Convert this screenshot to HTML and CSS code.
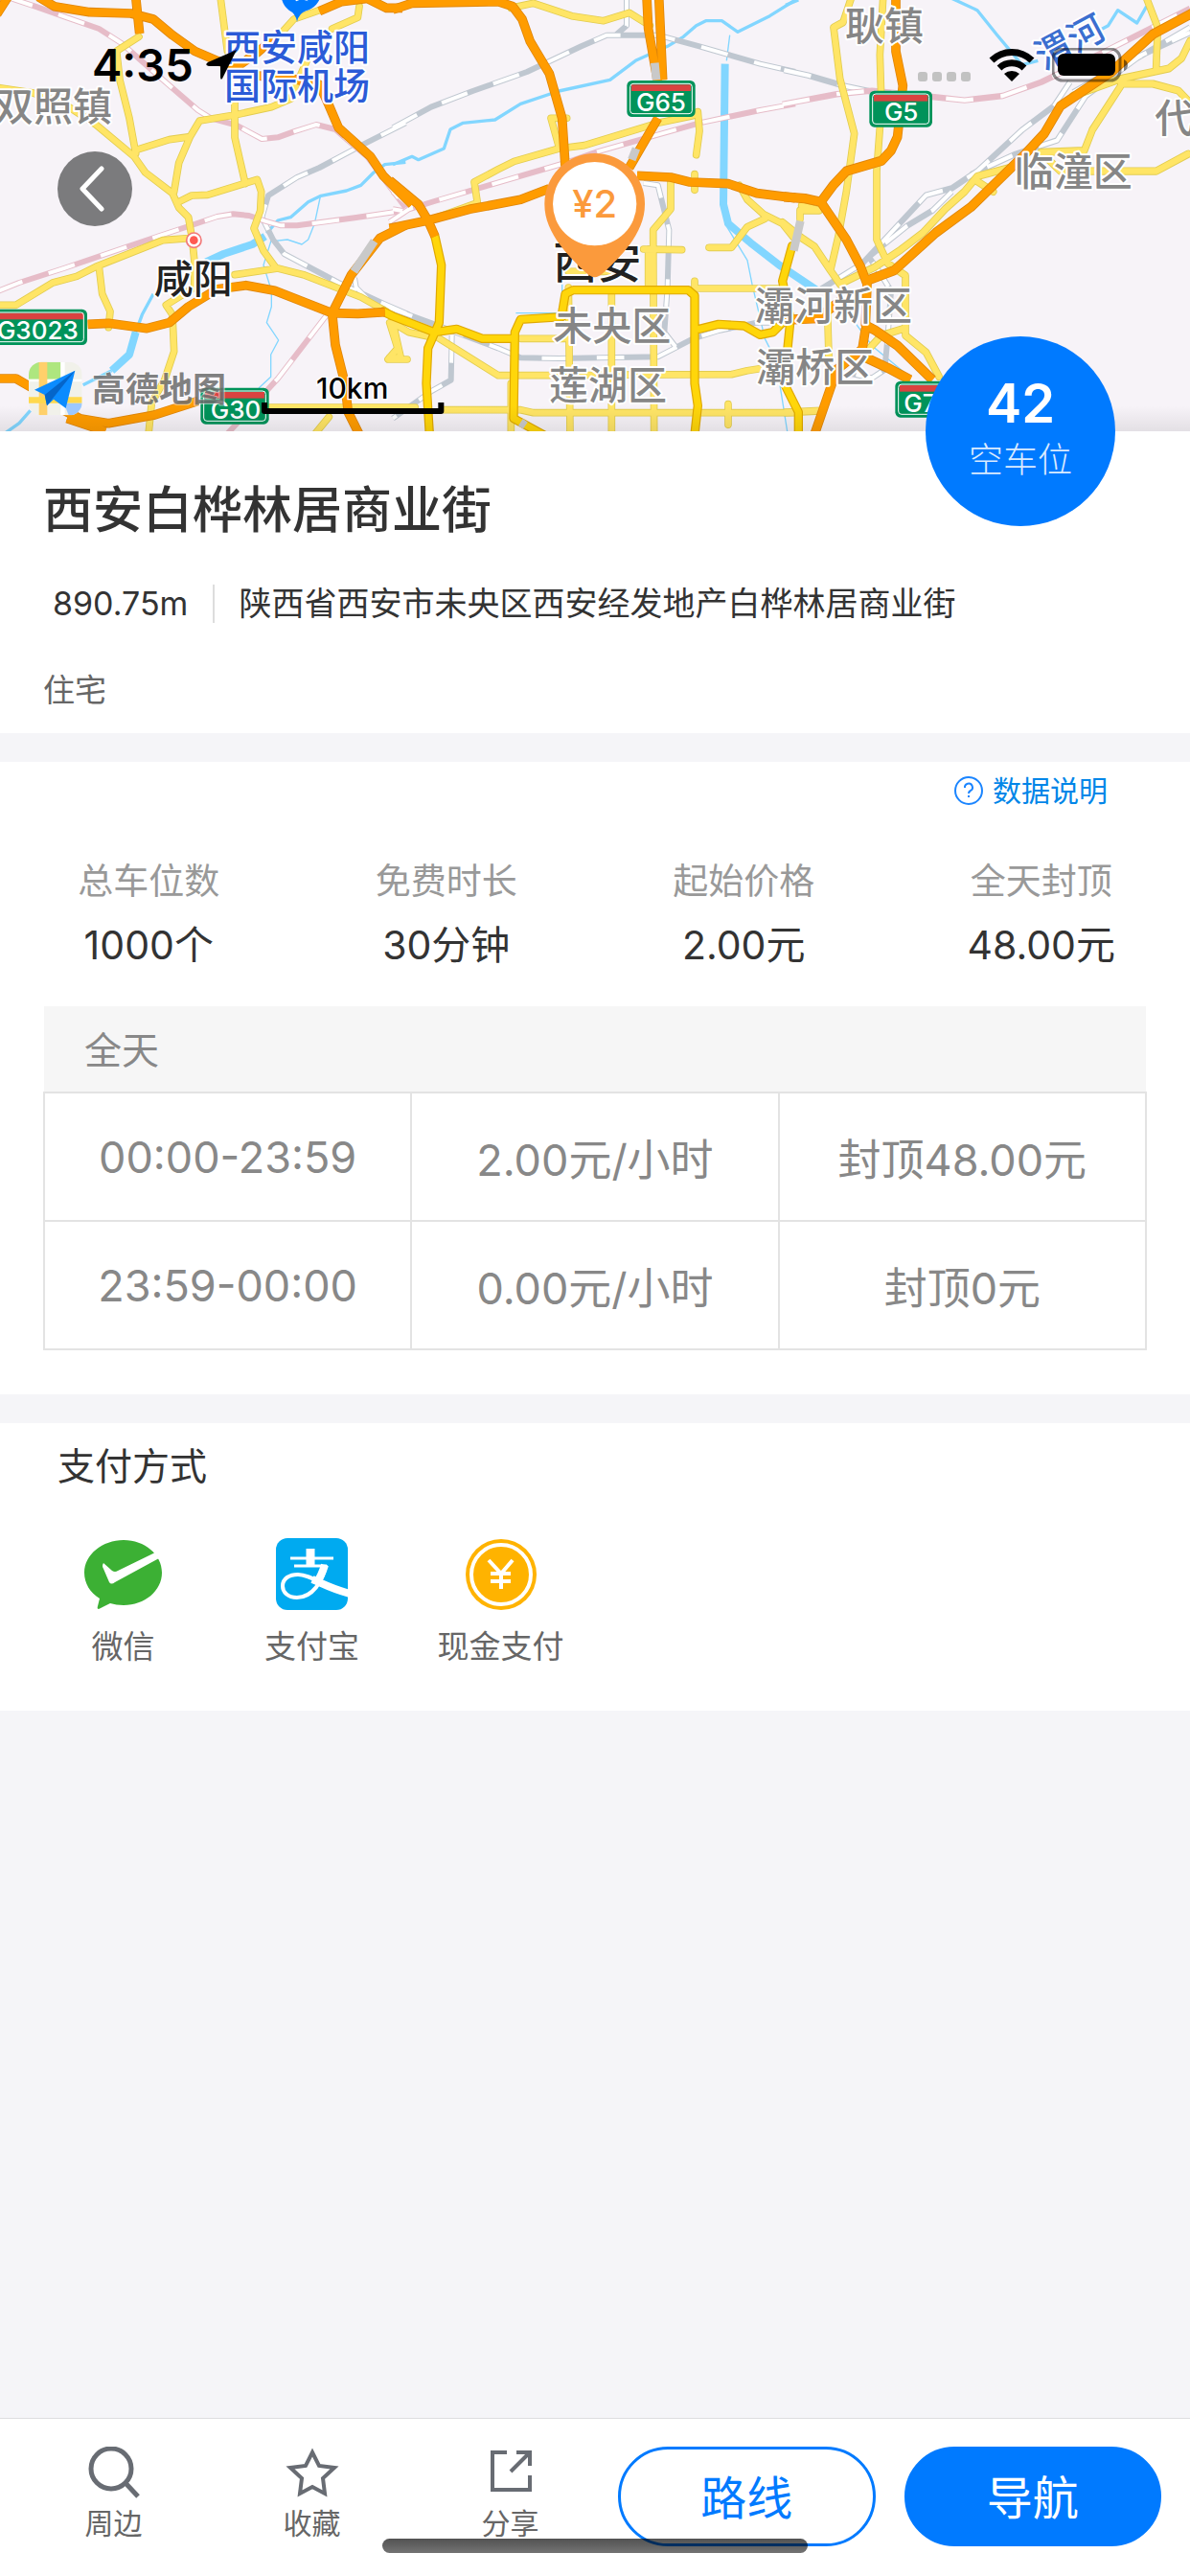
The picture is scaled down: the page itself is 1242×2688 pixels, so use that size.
FILE: index.html
```html
<!DOCTYPE html>
<html lang="zh-CN">
<head>
    <meta charset="UTF-8">
    <meta name="viewport" content="width=device-width, initial-scale=1">
    <title>西安白桦林居商业街</title>
    <link rel="stylesheet" href="styles.css">
</head>
<body>
<div class="app">
    <header class="map-header">
        <svg class="map" viewBox="0 0 3726 1350" preserveAspectRatio="xMidYMid slice">
            <defs>
                <g id="minor-roads">
                    <path d="M0 275L100 290L200 325L300 390L420 490L455 540L540 605L560 650L590 680L602 750L610 830L608 900L520 955L540 985L545 1100L515 1190L475 1260L465 1360M435 115L365 160L375 250L405 370L425 480M425 470L530 437L595 428L625 378L735 360L850 335L910 310L930 260L965 180M595 428L560 510L545 600M735 320V430L768 575M560 632L600 612L650 610L805 562L818 600L815 660L795 715L825 785L865 840M602 745L510 752L300 835L240 865L165 885L50 955H-10M310 835L320 920L345 975L340 1025M690 -10L712 160M1000 32L920 60L875 110M1125 20L1120 55L1040 90M735 860L870 840L950 860L1130 930L1210 975M740 1275H1300M1220 1010L1245 1090L1215 1125H1275M1030 1305L985 1360"/>
                    <path transform="translate(1230)" d="M370 25L440 10L560 50L660 65L740 40L805 80M135 682L265 635L255 570L330 530L380 505L520 465L600 455L830 385L940 362M545 370H495L520 460M955 350L960 410L950 485M870 570V655L815 720L818 1360M785 780L905 782M990 775H1060L1110 710L1165 685M1085 580L1110 625L1160 670L1220 700L1260 750M945 545V595M550 900L555 1360M685 920V1360M800 900V780M550 850H700M950 903H1220M945 880V905M400 1060H540M130 1050L330 1175L1060 1172L1110 1160L1240 1140M160 1283L400 1283L440 1292L1260 1292M1050 1265V1330M0 1010L50 1040L120 1055M0 1010L25 1120H-10M370 1200V1360"/>
                    <path transform="translate(2460) scale(1 1.0714)" d="M205 -5L180 65L150 80L170 230L215 390L190 560L165 690L140 790L170 830M305 -5L295 160L300 310L285 500V700L320 770L375 805V980L440 1030L480 1100M170 830L280 780L360 730L430 680L500 610L560 560L600 515L710 488M600 530L650 560M-10 650L50 695L90 720L140 790M50 600L105 615H45V640M130 880L135 1040M370 960L300 980L240 1040M1130 -5L1165 80L1160 200M900 280L1050 230L1200 200L1240 170L1266 120M1050 250L960 380L935 440L800 445L860 500H1160L1260 450M1050 245H1150L1230 265L1266 300M0 1205L110 1200"/>
                </g>
                <g id="ring-roads">
                    <path transform="translate(1230)" d="M-30 975L0 990L130 1040L200 1030L280 1060H370M132 740L152 830L145 1010L110 1090L105 1200L115 1360M530 980L540 920L565 908H925L945 925V1200L955 1270L945 1360M530 992L400 1000L382 1040L378 1310L470 1360M960 1030L1020 1015L1100 1020L1150 1048L1190 1040L1225 1005M1250 770L1220 880L1245 1000L1225 1200L1270 1290V1360"/>
                </g>
                <g id="highways">
                    <path d="M120 -10L170 20L280 38L410 42L480 60L540 110L610 160L680 190L740 210L805 165L870 110M780 235L910 245L1000 265L1030 330L1060 400L1110 445L1160 490L1200 550L1290 640M425 -10L437 105M-10 45L25 -10M1000 35L1070 5L1150 -5L1210 25L1260 25M275 1015L340 1012L460 1028L530 1010L590 960L680 905L770 893L860 910L950 945L1040 980L1120 982L1205 977M1270 705L1190 745L1100 860L1040 980L1050 1080L1080 1200L1090 1290L1130 1370M-10 1185H50L110 1220L190 1280L250 1310L340 1325L480 1300L620 1255M210 1310L330 1350"/>
                    <path transform="translate(1230)" d="M0 30L60 10L330 5L375 20L405 60L430 130L490 230L530 370L540 520M795 -10L800 90L830 260M833 -10L845 250M830 370L740 525M-10 715L110 690L240 655L400 625L490 590M765 550L870 555L930 570L1050 575L1140 605L1260 620M-10 565L80 640L110 690L132 740"/>
                    <path transform="translate(2460) scale(1 1.0714)" d="M345 -10V150L367 250L350 400L330 440L300 470L190 500L150 540L110 590M-5 575L60 580L110 590L190 700L235 780L255 830L250 950L280 965L350 1010L460 1110M250 960L240 1020L160 1080L90 1270M1280 35L1150 100L1020 210L860 310L810 390L750 450L580 605L470 680L340 790L240 825M-10 935L100 930L170 880M240 1040L320 1075L390 1110"/>
                </g>
                <g id="rail">
                    <path d="M1270 385L1145 448L1000 525L930 555L840 612L820 680L855 750L890 795L1060 885L1200 950L1280 985M1110 870L1115 900L1150 935"/>
                    <path transform="translate(1230)" d="M0 400L120 335L250 285L420 225L590 145L670 110L830 110L960 145L1150 200L1260 225M732 -5V80L700 108M785 573L830 580L865 720L860 900L850 1040L885 1085M-20 960L130 1015L330 1090L400 1120L520 1122L830 1117L940 1060L1020 1035L1140 1010H1240M185 1050L182 1190L120 1225L0 1310"/>
                    <path transform="translate(2460) scale(1 1.0714)" d="M-5 205L70 220L180 250L280 270M890 240L840 310L740 380L600 500L520 550L440 570L300 710L240 770L110 845M1266 80L1100 170L940 280L850 410L720 450L580 510M900 270L1070 180L1266 95M520 560L460 615L380 660L260 750L290 790L330 850L320 980L310 1080L270 1105L200 1090"/>
                </g>
                <g id="fast-rail">
                    <path d="M20 -10L110 20L210 55L310 90L380 135L510 250L620 345L660 370L740 392L820 435L870 430L920 412L990 390L1050 405L1090 440L1150 490L1270 650M-10 913L60 885L200 840L500 738L600 705L680 678L730 670L780 675L830 692L880 706H930L1110 682L1260 660M1020 990L870 1185L710 1360"/>
                    <path transform="translate(1230)" d="M-10 695L50 655L130 630L300 580L540 510L640 475L800 430L960 385L1150 345L1260 325M0 600L60 650M30 660L0 655"/>
                    <path transform="translate(2460) scale(1 1.0714)" d="M-10 305L160 275L270 265L480 285L560 293L680 280L800 240L1000 150L1266 25"/>
                </g>
                <linearGradient id="map-fade" x1="0" y1="0" x2="0" y2="1">
                    <stop offset="0" stop-color="#000" stop-opacity="0"/>
                    <stop offset="1" stop-color="#000" stop-opacity=".08"/>
                </linearGradient>
                <clipPath id="logo-clip">
                    <rect x="90" y="1133" width="167" height="167" rx="40"/>
                </clipPath>
            </defs>

            <rect class="land" width="3726" height="1350"/>

            <g class="river">
                <path d="M1270 508L1205 515L1170 540L1130 580L1085 597L1005 613L965 632L910 680L870 690L835 730M480 920L445 985L425 1040M350 1160L260 1205M95 1285L60 1325L10 1360"/>
                <path class="wide" d="M830 740L790 765L700 795L645 820M425 1040L405 1110L350 1160"/>
                <path class="thin" d="M850 750L825 830L850 910V960L835 1010L872 1065L848 1110V1180L810 1215M1003 615L985 700L965 750L945 765L900 750L855 755"/>
                <path transform="translate(1230)" d="M0 515L60 490L80 500L160 465L180 405L220 385L320 375L400 325L520 285L680 250L760 190L860 145L910 115L950 80L980 65L1030 65L1080 100L1180 50L1260 0"/>
                <path class="wide" transform="translate(1230)" d="M1040 200L1035 640L1050 700L1120 760L1210 830L1330 910"/>
                <path class="thin" transform="translate(1230)" d="M1045 190L1055 110M1040 700L1110 815L1125 890L1165 1060L1200 1130L1235 1350M385 980H530M530 860V980"/>
                <path transform="translate(2460)" d="M520 -5L600 32L660 107L740 203L790 190M980 96L1010 80L1040 32L1100 72L1130 20M0 16L40 0"/>
                <path class="thin" transform="translate(2460)" d="M210 1000L270 1082L380 1173"/>
            </g>

            <use href="#rail" class="rail-line"/>
            <use href="#rail" class="rail-dash"/>
            <use href="#fast-rail" class="rail-line fast"/>
            <use href="#fast-rail" class="rail-dash"/>
            <use href="#minor-roads" class="minor casing"/>
            <use href="#minor-roads" class="minor"/>
            <use href="#ring-roads" class="ring casing"/>
            <use href="#ring-roads" class="ring"/>
            <use href="#highways" class="highway casing"/>
            <use href="#highways" class="highway"/>
            <path class="tunnel" d="M1172 755L1108 850M2050 197L2055 250M1992 465L1978 500M2506 692L2485 785M1630 1322L1645 1332"/>

            <g class="shield">
                <rect x="-60" y="968" width="333" height="112" rx="16"/>
                <rect class="band" x="-48" y="980" width="310" height="20"/>
                <path d="M-60 978H253Q262 978 262 987V1061Q262 1070 253 1070H-60"/>
                <text x="118" y="1062">G3023</text>
                <rect x="628" y="1214" width="214" height="114" rx="16"/>
                <rect class="band" x="642" y="1227" width="186" height="20"/>
                <path d="M648 1224H822Q832 1224 832 1234V1308Q832 1318 822 1318H648Q638 1318 638 1308V1234Q638 1224 648 1224Z"/>
                <text x="738" y="1310">G30</text>
                <rect x="1963" y="252" width="214" height="114" rx="16"/>
                <rect class="band" x="1977" y="265" width="186" height="20"/>
                <path d="M1983 262H2157Q2167 262 2167 272V346Q2167 356 2157 356H1983Q1973 356 1973 346V272Q1973 262 1983 262Z"/>
                <text x="2070" y="347">G65</text>
                <rect x="2722" y="284" width="197" height="114" rx="16"/>
                <rect class="band" x="2736" y="297" width="169" height="20"/>
                <path d="M2742 294H2899Q2909 294 2909 304V378Q2909 388 2899 388H2742Q2732 388 2732 378V304Q2732 294 2742 294Z"/>
                <text x="2822" y="379">G5</text>
                <rect x="2803" y="1193" width="214" height="114" rx="16"/>
                <rect class="band" x="2817" y="1206" width="186" height="20"/>
                <path d="M2823 1203H2997Q3007 1203 3007 1213V1287Q3007 1297 2997 1297H2823Q2813 1297 2813 1287V1213Q2813 1203 2823 1203Z"/>
                <text x="2906" y="1289">G70</text>
            </g>

            <g class="place">
                <text x="-18" y="378">双照镇</text>
                <text x="1732" y="1066">未央区</text>
                <text x="1719" y="1251">莲湖区</text>
                <text x="2364" y="1003">灞河新区</text>
                <text x="2368" y="1195">灞桥区</text>
                <text x="2646" y="126">耿镇</text>
                <text x="3176" y="583">临潼区</text>
                <text x="3616" y="414">代</text>
            </g>
            <text class="place city" x="482" y="918">咸阳</text>
            <text class="place capital" x="1732" y="870">西安</text>
            <g class="place airport">
                <text x="702" y="188">西安咸阳</text>
                <text x="702" y="309">国际机场</text>
            </g>
            <text class="place water-name" x="3350" y="172" transform="rotate(-28 3350 132)">渭河</text>

            <circle cx="607" cy="752" r="23" fill="#fff" stroke="#f27a7a" stroke-width="5"/>
            <circle cx="607" cy="752" r="13" fill="#ff5a52"/>
            <path d="M881 -20A62 62 0 0 0 905 32Q926 42 930 68Q936 42 958 34A62 62 0 0 0 1005 -20Z" fill="#007aff"/>
            <path d="M920 -5L943 -12L966 4L943 -3L928 4Z" fill="#fff"/>

            <rect y="1270" width="3726" height="80" fill="url(#map-fade)"/>

            <g clip-path="url(#logo-clip)">
                <rect x="90" y="1133" width="167" height="167" fill="#f1f1ea"/>
                <path d="M90 1133H190V1187H90Z" fill="#aee67f"/>
                <path d="M190 1133H203V1300H190ZM90 1187H257V1195H90Z" fill="#fff"/>
                <path d="M122 1133H148V1300H122Z" fill="#ffd06b"/>
                <path d="M90 1243H257V1262H90Z" fill="#ffd84d"/>
                <path d="M200 1262H257V1300H215Z" fill="#9cc8ff"/>
            </g>
            <path d="M235 1160L108 1220L140 1236L147 1270L168 1250L206 1278Z" fill="#0b8bff"/>
            <path d="M235 1160L140 1236L147 1270Z" fill="#0565c9"/>
            <text class="amap-name" x="288" y="1256">高德地图</text>

            <text class="scale-text" x="1103" y="1248">10km</text>
            <path d="M828 1260V1287H1381V1260" fill="none" stroke="#000" stroke-width="18"/>

            <path d="M1862 480A157 157 0 0 0 1705 640C1705 720 1765 790 1836 855Q1862 880 1888 855C1960 790 2019 720 2019 640A157 157 0 0 0 1862 480Z" fill="#fb9a3c"/>
            <circle cx="1862" cy="638" r="131" fill="#fff"/>
            <text class="pin-price" x="1862" y="682">¥2</text>
        </svg>

        <div class="status-bar">
            <div class="status-left">
                <span class="time">4:35</span>
                <svg width="34" height="34" viewBox="0 0 34 34"><path d="M33 1L18 31Q16 33 16 29V18H4Q-1 17 3 14Z"/></svg>
            </div>
            <div class="status-right">
                <svg class="signal" width="56" height="34" viewBox="0 0 56 34">
                    <rect x="0" y="24" width="10" height="10" rx="3"/>
                    <rect x="15" y="24" width="10" height="10" rx="3"/>
                    <rect x="30" y="24" width="10" height="10" rx="3"/>
                    <rect x="45" y="24" width="10" height="10" rx="3"/>
                </svg>
                <svg width="48" height="36" viewBox="0 0 48 36">
                    <path d="M3 13A30 30 0 0 1 45 13" fill="none" stroke="#000" stroke-width="7"/>
                    <path d="M11 21A19 19 0 0 1 37 21" fill="none" stroke="#000" stroke-width="7"/>
                    <path d="M24 35L16 27A12 12 0 0 1 32 27Z"/>
                </svg>
                <svg width="80" height="36" viewBox="0 0 80 36">
                    <rect x="1" y="1" width="70" height="33" rx="10" fill="none" stroke="#000" stroke-opacity=".45" stroke-width="3"/>
                    <rect x="6" y="6" width="60" height="23" rx="6"/>
                    <path d="M75 12Q79 14 79 18Q79 22 75 24Z" fill-opacity=".5"/>
                </svg>
            </div>
        </div>

        <button class="back" type="button" aria-label="返回">
            <svg width="26" height="48" viewBox="0 0 26 48"><path d="M23 3L3 24L23 45" fill="none" stroke="#fff" stroke-width="5" stroke-linecap="round" stroke-linejoin="round"/></svg>
        </button>

        <div class="free-spots">
            <strong>42</strong>
            <span>空车位</span>
        </div>
    </header>

    <section class="info">
        <h1>西安白桦林居商业街</h1>
        <div class="address">
            <span class="distance">890.75m</span>
            <span>陕西省西安市未央区西安经发地产白桦林居商业街</span>
        </div>
        <p class="tag">住宅</p>
    </section>

    <section class="prices">
        <a class="data-link" href="#">
            <svg width="30" height="30" viewBox="0 0 30 30" fill="none" stroke="#1b85ff" stroke-width="2">
                <circle cx="15" cy="15" r="14"/>
                <path d="M11 12A4 4 0 1 1 17 15Q15 16 15 18"/>
                <path d="M15 20V22"/>
            </svg>
            数据说明
        </a>
        <dl class="stats">
            <div><dt>总车位数</dt><dd>1000个</dd></div>
            <div><dt>免费时长</dt><dd>30分钟</dd></div>
            <div><dt>起始价格</dt><dd>2.00元</dd></div>
            <div><dt>全天封顶</dt><dd>48.00元</dd></div>
        </dl>
        <table class="rates">
            <thead>
                <tr><th colspan="3">全天</th></tr>
            </thead>
            <tbody>
                <tr><td>00:00-23:59</td><td>2.00元/小时</td><td>封顶48.00元</td></tr>
                <tr><td>23:59-00:00</td><td>0.00元/小时</td><td>封顶0元</td></tr>
            </tbody>
        </table>
    </section>

    <section class="payment">
        <h2>支付方式</h2>
        <ul>
            <li>
                <svg width="82" height="75" viewBox="0 0 82 75">
                    <path d="M41 2C63 2 81 17 81 36S63 70 41 70C36 70 31 69 27 68L15 74Q13 74 14 71L16 63C6 57 0 47 0 36C0 17 19 2 41 2Z" fill="#3cb034"/>
                    <path d="M20 26Q18 29 20 32L26 46Q28 49 32 46L78 21L74 15L35 34Q32 36 29 34Z" fill="#fff"/>
                </svg>
                微信
            </li>
            <li>
                <svg width="75" height="75" viewBox="0 0 75 75">
                    <rect width="75" height="75" rx="12" fill="#00aaf0"/>
                    <g fill="none" stroke="#fff">
                        <path d="M36 11V29" stroke-width="9"/>
                        <path d="M15 21H60M19 29H53" stroke-width="3"/>
                        <path d="M52 28C49 45 38 62 22 62C12 62 7 56 7 50C7 42 14 38 23 38C37 38 52 52 76 58" stroke-width="4"/>
                        <path d="M51 28C48 38 45 43 42 47" stroke-width="8"/>
                        <path d="M38 43C50 48 60 54 78 58" stroke-width="8"/>
                    </g>
                </svg>
                支付宝
            </li>
            <li>
                <svg width="75" height="75" viewBox="0 0 75 75">
                    <circle cx="38" cy="38" r="37" fill="#ffb300"/>
                    <circle cx="38" cy="38" r="31" fill="none" stroke="#fff" stroke-width="4"/>
                    <path d="M25 23L38 37L50 23M38 36V53M27 37H48M27 45H48" fill="none" stroke="#fff" stroke-width="4"/>
                </svg>
                现金支付
            </li>
        </ul>
    </section>

    <footer class="toolbar">
        <button class="tool" type="button">
            <svg width="56" height="54" viewBox="0 0 56 54" fill="none" stroke="#686c73">
                <circle cx="25" cy="23" r="21" stroke-width="5"/>
                <path d="M40 38L53 52" stroke-width="5"/>
            </svg>
            周边
        </button>
        <button class="tool" type="button">
            <svg width="56" height="54" viewBox="0 0 56 54"><path d="M28 6L35 20L51 22L39 33L41 49L28 42L15 49L17 33L5 22L21 20Z" fill="none" stroke="#686c73" stroke-width="4"/></svg>
            收藏
        </button>
        <button class="tool" type="button">
            <svg width="56" height="54" viewBox="0 0 56 54" fill="none" stroke="#686c73" stroke-width="4">
                <path d="M24 6H9V45H48V30"/>
                <path d="M34 6H48V20M48 6L28 26"/>
            </svg>
            分享
        </button>
        <button class="pill outline" type="button">路线</button>
        <button class="pill" type="button">导航</button>
        <div class="home-indicator"></div>
    </footer>
</div>
</body>
</html>
```
FILE: styles.css
```css
* { box-sizing: border-box; }
body {
    margin: 0;
    background: #f5f5f8;
    color: #333;
    font-family: Inter, "Noto Sans CJK SC", sans-serif;
}
h1, h2, p, dl, dd, ul { margin: 0; padding: 0; }
button {
    font-family: inherit;
    border: none;
    padding: 0;
    cursor: pointer;
}
svg { display: block; flex: none; }
.app {
    display: flex;
    flex-direction: column;
    gap: 30px;
    min-height: 100vh;
}

/* map */
.map-header {
    position: relative;
    height: 450px;
    margin-bottom: -30px;
    z-index: 1;
}
.map {
    position: absolute;
    top: 0;
    left: 0;
    width: 100%;
    height: 100%;
}
.map use, .map path { stroke-linejoin: round; }
.land { fill: #f7f3f8; }
.river { fill: none; stroke: #82d6ff; stroke-width: 10px; }
.river .wide { stroke-width: 24px; }
.river .thin { stroke-width: 4px; }
.rail-line { fill: none; stroke: #bfc7d0; stroke-width: 18px; }
.rail-line.fast { stroke: #e6bcc8; }
.rail-dash { fill: none; stroke: #fff; stroke-width: 12px; stroke-dasharray: 86 86; }
.minor { fill: none; stroke: #ffe566; stroke-width: 18px; stroke-linecap: round; }
.minor.casing { stroke: #e2cc50; stroke-width: 23px; }
.ring { fill: none; stroke: #ffd60a; stroke-width: 21px; stroke-linecap: round; }
.ring.casing { stroke: #dfa800; stroke-width: 28px; }
.highway { fill: none; stroke: #ff9c00; stroke-width: 24px; }
.highway.casing { stroke: #e08608; stroke-width: 29px; }
.tunnel { fill: none; stroke: #c9c9c9; stroke-width: 26px; }
.shield rect { fill: #00935a; }
.shield .band { fill: #d94340; }
.shield path { fill: none; stroke: #fff; stroke-width: 3px; }
.shield text {
    fill: #fff;
    font-size: 78px;
    font-weight: 500;
    text-anchor: middle;
}
.place {
    fill: #868686;
    stroke: #fff;
    stroke-width: 12px;
    stroke-linejoin: round;
    paint-order: stroke;
    font-size: 123px;
    font-weight: 500;
}
.place.city { fill: #222; }
.place.capital { fill: #222; font-size: 138px; }
.place.airport { fill: #2b5bd7; font-size: 114px; }
.place.water-name { fill: #3b6fd0; font-size: 114px; text-anchor: middle; }
.amap-name {
    fill: #6b6b6b;
    fill-opacity: .85;
    stroke: #fff;
    stroke-width: 6px;
    stroke-opacity: .5;
    paint-order: stroke;
    font-size: 105px;
    font-weight: 700;
}
.scale-text {
    font-size: 90px;
    font-weight: 500;
    text-anchor: middle;
    stroke: #fff;
    stroke-width: 8px;
    paint-order: stroke;
}
.pin-price {
    fill: #fb9a3c;
    font-size: 120px;
    font-weight: 500;
    text-anchor: middle;
}

/* status bar */
.status-bar {
    position: relative;
    display: flex;
    justify-content: space-between;
    padding: 40px 64px 0 96px;
}
.status-left, .status-right {
    display: flex;
    align-items: center;
    height: 56px;
}
.status-left { gap: 12px; }
.status-right { gap: 18px; }
.time {
    font-size: 47px;
    line-height: 56px;
    font-weight: 600;
    color: #000;
}
.signal { fill: #c2c2c2; }
.back {
    position: relative;
    display: flex;
    align-items: center;
    justify-content: center;
    width: 78px;
    height: 78px;
    margin: 62px 0 0 60px;
    padding-right: 6px;
    border-radius: 50%;
    background: #7b7b7d;
}
.free-spots {
    position: absolute;
    right: 78px;
    bottom: -99px;
    width: 198px;
    height: 198px;
    border-radius: 50%;
    background: #007aff;
    color: #fff;
    display: flex;
    flex-direction: column;
    align-items: center;
    justify-content: center;
}
/* shadow only falls on the map half */
.free-spots::before {
    content: "";
    position: absolute;
    z-index: -1;
    left: -30px;
    right: -30px;
    top: -30px;
    height: 129px;
    background: radial-gradient(circle at 50% 129px, rgba(0, 0, 0, .12) 96px, rgba(0, 0, 0, 0) 128px);
}
.free-spots strong {
    font-size: 56px;
    line-height: 60px;
    font-weight: 600;
}
.free-spots span {
    font-size: 36px;
    line-height: 58px;
    font-weight: 300;
    opacity: .85;
}

/* parking lot info */
.info {
    background: #fff;
    padding: 50px 45px 25px;
}
.info h1 {
    font-size: 52px;
    line-height: 66px;
    font-weight: 500;
}
.address {
    display: flex;
    margin-top: 44px;
    font-size: 34px;
    line-height: 40px;
}
.distance {
    padding: 0 26px 0 10px;
    margin-right: 25px;
    border-right: 2px solid #ddd;
}
.tag {
    margin-top: 50px;
    font-size: 33px;
    line-height: 40px;
    color: #666;
}

/* prices */
.prices {
    background: #fff;
    padding: 10px 0 46px;
}
.data-link {
    display: flex;
    align-items: center;
    gap: 10px;
    width: fit-content;
    margin-left: auto;
    margin-right: 86px;
    font-size: 30px;
    line-height: 40px;
    color: #0086e8;
    text-decoration: none;
}
.stats {
    display: grid;
    grid-template-columns: repeat(4, 1fr);
    margin-top: 50px;
    text-align: center;
}
.stats dt {
    font-size: 37px;
    line-height: 50px;
    color: #999;
}
.stats dd {
    margin-top: 16px;
    font-size: 41px;
    line-height: 50px;
}
.rates {
    width: calc(100% - 90px);
    margin: 39px 45px 0;
    border-collapse: collapse;
    table-layout: fixed;
    color: #888;
}
.rates th {
    height: 90px;
    padding: 0 42px 4px;
    background: #f6f6f6;
    text-align: left;
    font-size: 39px;
    font-weight: 400;
}
.rates td {
    height: 134px;
    padding: 0;
    border: 2px solid #e3e3e3;
    text-align: center;
    font-size: 45px;
}

/* payment */
.payment {
    background: #fff;
    padding: 20px 30px 47px;
}
.payment h2 {
    padding-left: 30px;
    font-size: 39px;
    line-height: 50px;
    font-weight: 400;
}
.payment ul {
    display: flex;
    margin-top: 50px;
    list-style: none;
}
.payment li {
    display: flex;
    flex-direction: column;
    align-items: center;
    gap: 18px;
    width: 197px;
    font-size: 33px;
    line-height: 40px;
    color: #666;
}

/* bottom bar */
.toolbar {
    position: relative;
    display: flex;
    align-items: flex-start;
    margin-top: auto;
    padding: 29px 30px 31px 15px;
    background: #fff;
    border-top: 1px solid #dedee0;
}
.tool {
    display: flex;
    flex-direction: column;
    align-items: center;
    gap: 8px;
    flex: 0 1 207px;
    background: none;
    color: #666;
    font-size: 30px;
    line-height: 36px;
}
.pill {
    flex: 1;
    height: 104px;
    margin-left: 30px;
    padding-bottom: 4px;
    border: 3px solid #007aff;
    border-radius: 52px;
    background: #007aff;
    color: #fff;
    font-size: 48px;
}
.pill.outline {
    margin-left: 9px;
    background: #fff;
    color: #007aff;
}
.home-indicator {
    position: absolute;
    left: 50%;
    bottom: 24px;
    width: 444px;
    height: 15px;
    margin-left: -222px;
    border-radius: 8px;
    background: linear-gradient(rgba(0, 0, 0, .68), rgba(0, 0, 0, .55));
}
```
